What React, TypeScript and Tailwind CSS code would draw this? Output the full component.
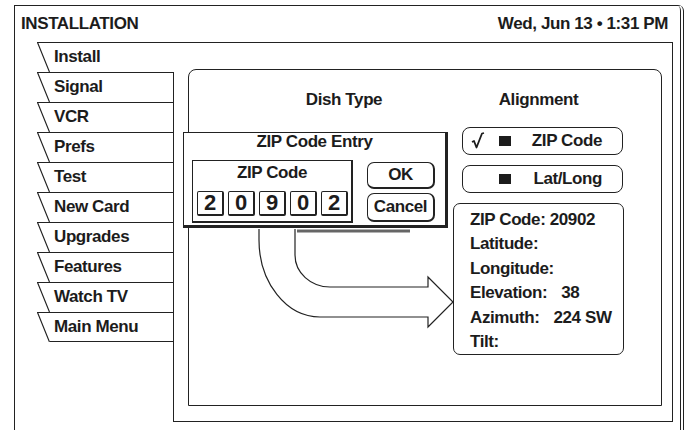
import React from 'react'

const tabs = ['Install', 'Signal', 'VCR', 'Prefs', 'Test', 'New Card', 'Upgrades', 'Features', 'Watch TV', 'Main Menu']

function Slant() {
  return (
    <svg width="13" height="30" viewBox="0 0 13 30" className="block shrink-0">
      <path d="M0 0.5 H13 M0.5 0.5 L12.5 30" stroke="#222" strokeWidth="1.2" fill="none" />
    </svg>
  )
}

function Check() {
  return (
    <svg width="14" height="18" viewBox="0 0 14 18" className="block">
      <path d="M1 10 L3 9 L5.5 15.5 L11 1.5 L13 1" stroke="#1c1c1c" strokeWidth="1.8" fill="none" strokeLinejoin="round" />
    </svg>
  )
}

function Arrow() {
  return (
    <svg
      className="absolute left-0 top-0 pointer-events-none"
      width="471"
      height="334"
      viewBox="189 70 471 334"
    >
      <path
        d="M295 229 V255 A35 32 0 0 0 330 287 H428 V277 L453 302 L428 327 V317 H320 A61 77 0 0 1 259 240 V229"
        stroke="#222"
        strokeWidth="1.2"
        fill="none"
      />
      <path d="M297 231 H410" stroke="#666" strokeWidth="3" />
    </svg>
  )
}

export default function App() {
  return (
    <div className="w-[688px] h-[430px] bg-white overflow-hidden text-[#1c1c1c] font-['Liberation_Sans',Arial,sans-serif] font-bold text-[17px] tracking-[-0.4px]">
      <div className="ml-[14px] mt-[5px] w-[670px] h-[440px] border-l border-t border-[#222] border-r-4 [border-right-style:double] rounded-tr-[6px]">
        <div className="h-[36px] flex items-center justify-between pl-[6px] pr-[12px]">
          <span>INSTALLATION</span>
          <span>Wed, Jun 13 • 1:31 PM</span>
        </div>

        <div className="flex">
          <div className="w-[159px] flex flex-col">
            {tabs.map((t, i) => (
              <div key={t} className="flex h-[30px]">
                <div className="w-[22px] shrink-0" />
                <Slant />
                <div
                  className={`flex-1 border-t border-[#222] pl-[4px] leading-[28px] ${i === 0 ? '' : 'border-r'} ${i === tabs.length - 1 ? 'border-b' : ''}`}
                >
                  {t}
                </div>
              </div>
            ))}
            <div className="flex-1 border-r border-[#222]" />
          </div>

          <div className="flex-1 mr-[7px] h-[380px] border-t border-r border-b border-[#222] pt-[26px] pl-[14px] pr-[10px] pb-[15px]">
            <div className="relative h-full border border-[#222] rounded-t-[8px]">
              <div className="flex pt-[21px]">
                <div className="w-[264px] pl-[46px] text-center leading-[18px]">Dish Type</div>
                <div className="w-[171px] flex flex-col">
                  <div className="text-center leading-[18px]">Alignment</div>
                  <div className="mt-[18px] ml-[9px] w-[161px] h-[28px] border border-[#222] rounded-[8px] flex items-center pl-[8px]">
                    <div className="w-[24px]">
                      <Check />
                    </div>
                    <div className="w-[12px] h-[10px] bg-[#1c1c1c] ml-[4px]" />
                    <div className="flex-1 text-right pr-[20px] leading-[18px]">ZIP Code</div>
                  </div>
                  <div className="mt-[10px] ml-[9px] w-[161px] h-[28px] border border-[#222] rounded-[8px] flex items-center pl-[8px]">
                    <div className="w-[24px]" />
                    <div className="w-[12px] h-[10px] bg-[#1c1c1c] ml-[4px]" />
                    <div className="flex-1 text-right pr-[20px] leading-[18px]">Lat/Long</div>
                  </div>
                  <div className="mt-[10px] h-[152px] border border-[#222] rounded-[7px] pt-[4px] pl-[16px] leading-[24.4px] whitespace-nowrap">
                    <div>ZIP Code: 20902</div>
                    <div>Latitude:</div>
                    <div>Longitude:</div>
                    <div>
                      Elevation:<span className="ml-[14px]">38</span>
                    </div>
                    <div>
                      Azimuth:<span className="ml-[14px]">224 SW</span>
                    </div>
                    <div>Tilt:</div>
                  </div>
                </div>
              </div>

              <Arrow />

              <div className="absolute left-[-6px] top-[62px] w-[265px] h-[96px] bg-white border border-[#222] border-r-[3px] border-b-[3px]">
                <div className="text-center leading-[18px]">ZIP Code Entry</div>
                <div className="flex mt-[9px] ml-[8px]">
                  <div className="w-[161px] h-[63px] border border-[#222] border-r-2 border-b-2">
                    <div className="text-center leading-[18px] mt-[3px]">ZIP Code</div>
                    <div className="flex gap-[4px] mt-[9px] pl-[4px]">
                      {['2', '0', '9', '0', '2'].map((d, i) => (
                        <div
                          key={i}
                          className="w-[27px] h-[25px] border border-[#222] border-r-2 border-b-2 rounded-[2px] flex items-center justify-center text-[22px] tracking-normal leading-none"
                        >
                          {d}
                        </div>
                      ))}
                    </div>
                  </div>
                  <div className="ml-[14px] flex flex-col">
                    <div className="mt-[2px] w-[68px] h-[27px] border border-[#222] border-r-2 border-b-2 rounded-[7px] flex items-center justify-center">
                      OK
                    </div>
                    <div className="mt-[4px] w-[68px] h-[29px] border border-[#222] border-r-2 border-b-2 rounded-[7px] flex items-center justify-center">
                      Cancel
                    </div>
                  </div>
                </div>
              </div>
            </div>
          </div>
        </div>
      </div>
    </div>
  )
}
